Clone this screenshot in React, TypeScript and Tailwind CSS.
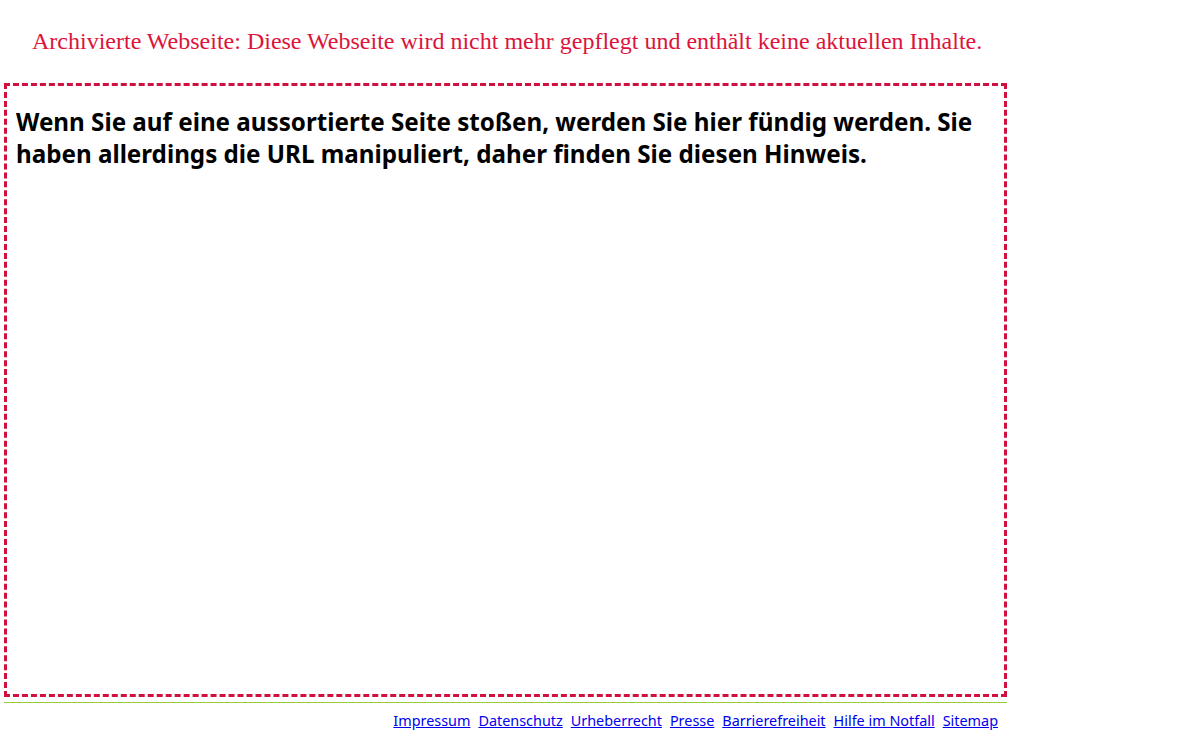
export default function App() {
  const links = ["Impressum", "Datenschutz", "Urheberrecht", "Presse", "Barrierefreiheit", "Hilfe im Notfall", "Sitemap"];
  return (
    <div className="w-[1200px] h-[740px] bg-white overflow-hidden">
      <div className="w-[1003px] ml-[4px]">
        <p className="pt-[26px] pl-[28px] h-[83px] text-[24px] leading-[30px] text-[#dc143c] font-['Liberation_Serif',serif]">
          Archivierte Webseite: Diese Webseite wird nicht mehr gepflegt und enthält keine aktuellen Inhalte.
        </p>
        <main className="h-[614px] border-[3px] border-dashed border-[#d0103f] px-[9px] pt-[20px]">
          <h1 className="text-[24.2px] leading-[32px] font-bold text-black font-['Noto_Sans',sans-serif]">
            Wenn Sie auf eine aussortierte Seite stoßen, werden Sie hier fündig werden. Sie
            <br />
            haben allerdings die URL manipuliert, daher finden Sie diesen Hinweis.
          </h1>
        </main>
        <footer className="mt-[5px] border-t border-[#9acd32] pt-[8px] pr-[9px] flex justify-end gap-[8px] text-[14.4px] leading-[20px] font-['Noto_Sans',sans-serif]">
          {links.map((l) => (
            <a key={l} href="#" className="text-[#0000ee] underline">
              {l}
            </a>
          ))}
        </footer>
      </div>
    </div>
  );
}
